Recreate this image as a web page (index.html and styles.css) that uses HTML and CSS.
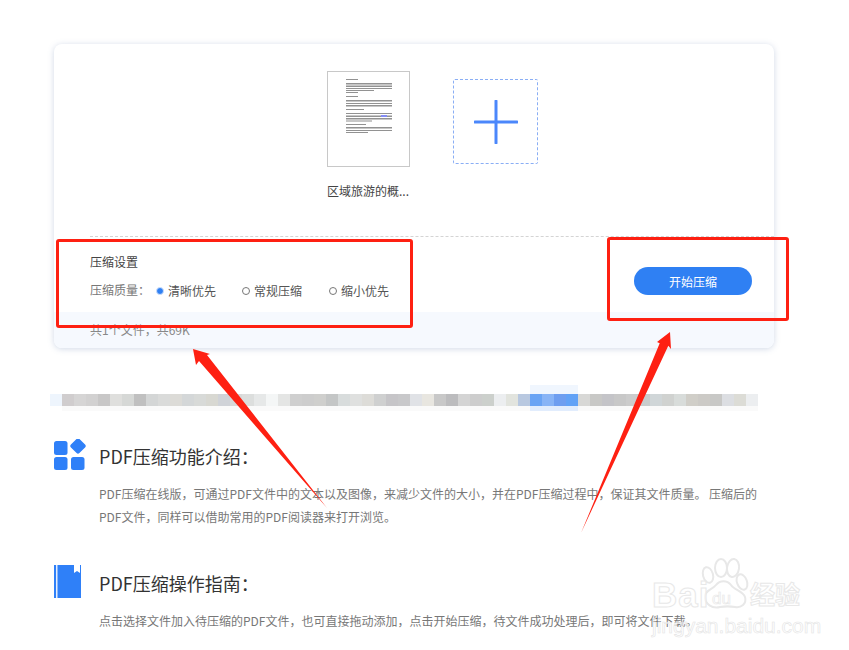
FILE: index.html
```html
<!DOCTYPE html>
<html lang="zh-CN">
<head>
<meta charset="utf-8">
<title>PDF压缩</title>
<link rel="stylesheet" href="styles.css">
</head>
<body>
<main class="page">
  <section class="card">
    <div class="files">
      <figure class="file">
        <div class="thumb">
          <svg class="thumb-lines" width="81" height="93" viewBox="0 0 81 93">
            <g fill="#555" opacity=".75">
              <rect x="18" y="7" width="12" height="1"/>
              <rect x="18" y="11" width="46" height="1.5"/><rect x="18" y="13.5" width="46" height="1.5"/><rect x="18" y="16" width="46" height="1"/><rect x="18" y="18" width="28" height="1"/>
              <rect x="18" y="20" width="12" height="1"/>
              <rect x="18" y="24" width="12" height="1"/>
              <rect x="18" y="28" width="46" height="1.5"/><rect x="18" y="31" width="46" height="1"/><rect x="18" y="33" width="46" height="1.5"/>
              <rect x="18" y="37" width="18" height="1"/>
              <rect x="18" y="41" width="46" height="1"/><rect x="18" y="43.5" width="46" height="1.5"/><rect x="18" y="46" width="46" height="1.5"/><rect x="18" y="48.5" width="26" height="1"/>
              <rect x="18" y="52" width="20" height="1"/>
              <rect x="18" y="55" width="46" height="1.5"/><rect x="18" y="58" width="46" height="1"/><rect x="18" y="60" width="22" height="1"/>
            </g>
            <rect x="53" y="43" width="6" height="2" fill="#6f79f2"/>
          </svg>
        </div>
        <figcaption class="file-name">区域旅游的概...</figcaption>
      </figure>
      <button class="add" type="button" aria-label="添加文件">
        <svg width="44" height="44" viewBox="0 0 44 44"><path d="M22 1v42M1 22h42" fill="none" stroke="#4b87fb" stroke-width="3" stroke-linecap="round"/></svg>
      </button>
    </div>
    <div class="settings">
      <div class="options">
        <h2 class="options-title">压缩设置</h2>
        <div class="quality">
          <span class="quality-label">压缩质量：</span>
          <span class="radio radio-first"><i class="dot dot-on"></i>清晰优先</span>
          <span class="radio radio-second"><i class="dot"></i>常规压缩</span>
          <span class="radio"><i class="dot"></i>缩小优先</span>
        </div>
      </div>
      <button class="start" type="button">开始压缩</button>
    </div>
    <div class="summary">共1个文件，共69K</div>
  </section>

  <svg class="mosaic" width="708" height="26" viewBox="0 0 708 26" shape-rendering="crispEdges" aria-hidden="true">
    <rect x="480" y="0" width="48" height="9" fill="#f0f6fe"/>
    <rect x="12" y="21" width="470" height="5" fill="#fafafa"/><rect x="480" y="21" width="48" height="5" fill="#e2edfd"/><rect x="528" y="21" width="180" height="5" fill="#fafafa"/>
    <g>
      <rect x="0" y="9" width="12" height="12" fill="#eef5fd"/><rect x="12" y="9" width="12" height="12" fill="#d0cdce"/><rect x="24" y="9" width="12" height="12" fill="#d6d5d5"/><rect x="36" y="9" width="12" height="12" fill="#d2d1d1"/><rect x="48" y="9" width="12" height="12" fill="#c8c7c7"/><rect x="60" y="9" width="12" height="12" fill="#dfdfdd"/><rect x="72" y="9" width="12" height="12" fill="#d6d8d6"/><rect x="84" y="9" width="12" height="12" fill="#c0c0c0"/><rect x="96" y="9" width="12" height="12" fill="#d4d6d6"/><rect x="108" y="9" width="12" height="12" fill="#dadbda"/><rect x="120" y="9" width="12" height="12" fill="#dcdbd7"/><rect x="132" y="9" width="12" height="12" fill="#d4d7d8"/><rect x="144" y="9" width="12" height="12" fill="#d8dad8"/><rect x="156" y="9" width="12" height="12" fill="#d8d8d2"/><rect x="168" y="9" width="12" height="12" fill="#d0d3d8"/><rect x="180" y="9" width="12" height="12" fill="#d8d8d8"/><rect x="192" y="9" width="12" height="12" fill="#dcdedd"/><rect x="204" y="9" width="12" height="12" fill="#e6e8e8"/><rect x="216" y="9" width="12" height="12" fill="#f4f6f6"/><rect x="228" y="9" width="12" height="12" fill="#e4e5e4"/><rect x="240" y="9" width="12" height="12" fill="#cfcfcf"/><rect x="252" y="9" width="12" height="12" fill="#cdcdcd"/><rect x="264" y="9" width="12" height="12" fill="#cfcfcd"/><rect x="276" y="9" width="12" height="12" fill="#c4c6c6"/><rect x="288" y="9" width="12" height="12" fill="#d8dcdc"/><rect x="300" y="9" width="12" height="12" fill="#dfe0df"/><rect x="312" y="9" width="12" height="12" fill="#dddcd8"/><rect x="324" y="9" width="12" height="12" fill="#cfd0d0"/><rect x="336" y="9" width="12" height="12" fill="#c6c5c8"/><rect x="348" y="9" width="12" height="12" fill="#c8c8ca"/><rect x="360" y="9" width="12" height="12" fill="#e0e2e6"/><rect x="372" y="9" width="12" height="12" fill="#e8e6e0"/><rect x="384" y="9" width="12" height="12" fill="#c8c8c8"/><rect x="396" y="9" width="12" height="12" fill="#bcbcbe"/><rect x="408" y="9" width="12" height="12" fill="#d4d4d4"/><rect x="420" y="9" width="12" height="12" fill="#cdcdcd"/><rect x="432" y="9" width="12" height="12" fill="#ccd0cc"/><rect x="444" y="9" width="12" height="12" fill="#eceef0"/><rect x="456" y="9" width="12" height="12" fill="#e2e4de"/><rect x="468" y="9" width="12" height="12" fill="#b8c8e0"/><rect x="480" y="9" width="12" height="12" fill="#6aa4f4"/><rect x="492" y="9" width="12" height="12" fill="#88b4f6"/><rect x="504" y="9" width="12" height="12" fill="#6e9ef0"/><rect x="516" y="9" width="12" height="12" fill="#62a2f6"/><rect x="528" y="9" width="12" height="12" fill="#d8d8d6"/><rect x="540" y="9" width="12" height="12" fill="#c8c8c6"/><rect x="552" y="9" width="12" height="12" fill="#c4c4c8"/><rect x="564" y="9" width="12" height="12" fill="#c8c8c8"/><rect x="576" y="9" width="12" height="12" fill="#cccccc"/><rect x="588" y="9" width="12" height="12" fill="#c8cccc"/><rect x="600" y="9" width="12" height="12" fill="#d0d6d8"/><rect x="612" y="9" width="12" height="12" fill="#d0d2d0"/><rect x="624" y="9" width="12" height="12" fill="#d8dcda"/><rect x="636" y="9" width="12" height="12" fill="#d0cec8"/><rect x="648" y="9" width="12" height="12" fill="#cccac6"/><rect x="660" y="9" width="12" height="12" fill="#c8c8c6"/><rect x="672" y="9" width="12" height="12" fill="#dcdee2"/><rect x="684" y="9" width="12" height="12" fill="#dcdcd6"/><rect x="696" y="9" width="12" height="12" fill="#eceef0"/>
    </g>
  </svg>

  <section class="intro intro-first">
    <h2 class="intro-title">
      <svg class="intro-icon" width="33" height="33" viewBox="0 0 33 33">
        <g fill="#2f80f8">
          <rect x="0" y="2" width="13.5" height="14" rx="2.5"/>
          <rect x="0" y="18" width="13.5" height="13" rx="2.5"/>
          <rect x="17" y="18" width="13.5" height="13" rx="2.5"/>
          <rect x="18" y="1" width="12" height="12" rx="2" transform="rotate(45 24 7)"/>
        </g>
      </svg>
      PDF压缩功能介绍：
    </h2>
    <p class="intro-text">PDF压缩在线版，可通过PDF文件中的文本以及图像，来减少文件的大小，并在PDF压缩过程中，保证其文件质量。 压缩后的PDF文件，同样可以借助常用的PDF阅读器来打开浏览。</p>
  </section>

  <section class="intro">
    <h2 class="intro-title">
      <svg class="intro-icon intro-icon-book" width="33" height="33" viewBox="0 0 33 33">
        <rect x="0" y="0" width="27" height="33" fill="#2f80f8"/>
        <rect x="2" y="0" width="1.5" height="33" fill="#e4eefe"/>
        <path d="M20 0h6v8l-3-2-3 2z" fill="#fff"/>
      </svg>
      PDF压缩操作指南：
    </h2>
    <p class="intro-text">点击选择文件加入待压缩的PDF文件，也可直接拖动添加，点击开始压缩，待文件成功处理后，即可将文件下载。</p>
  </section>
</main>

<div class="mark mark-left"></div>
<div class="mark mark-right"></div>

<svg class="arrows" width="849" height="650" viewBox="0 0 849 650" aria-hidden="true">
  <path d="M193 349 210 354 207 355 327 508 199 361 196 365Z" fill="#fe2012"/>
  <path d="M670 332 671 349 668.3 345.7 581 533 659.7 343.3 657 342Z" fill="#fe2012"/>
</svg>

<div class="watermark" aria-hidden="true">
  <svg class="paw" width="60" height="56" viewBox="0 0 60 56">
    <g fill="none" stroke="#e8e8e8" stroke-width="2">
      <ellipse cx="15" cy="20" rx="5" ry="8" transform="rotate(-15 15 20)"/>
      <ellipse cx="28" cy="13" rx="6" ry="9"/>
      <ellipse cx="40" cy="13" rx="6" ry="9" transform="rotate(8 40 13)"/>
      <ellipse cx="49" cy="27" rx="5" ry="8" transform="rotate(-20 49 27)"/>
      <path d="M12 42c0-7 7-7 11-12 4-5 11-5 15 0 3 5 12 6 14 12 2 7-4 11-10 10-6-1-9-1-15 0-8 2-15-3-15-10z"/>
    </g>
  </svg>
  <span class="wm-bai">Bai</span>
  <span class="wm-du">du</span>
  <span class="wm-jy">经验</span>
  <span class="wm-url">jingyan.baidu.com</span>
</div>
</body>
</html>
```

FILE: styles.css
```css
* { box-sizing: border-box; }
html, body { margin: 0; height: 650px; overflow: hidden; background: #fff; }
body { font-family: "Noto Sans CJK SC", "Noto Sans", sans-serif; color: #333; font-size: 12px; }

.page { padding: 44px 0 0 50px; width: 849px; }

.card {
  width: 720px; height: 304px; margin-left: 4px;
  display: flex; flex-direction: column;
  background: #fff; border-radius: 8px;
  box-shadow: 0 1px 6px rgba(90, 120, 170, .28);
  overflow: hidden;
}
.files { height: 193px; display: flex; align-items: flex-start; gap: 43px; padding: 27px 0 0 273px; position: relative; }
.file { margin: 0; width: 83px; }
.thumb { width: 83px; height: 96px; border: 1px solid #c8c8c8; background: #fff; }
.thumb-lines { display: block; filter: blur(.5px); opacity: .85; }
.file-name { margin-top: 15px; line-height: 18px; white-space: nowrap; color: #444; }
.add {
  width: 85px; height: 85px; margin-top: 8px; padding: 0;
  display: flex; align-items: center; justify-content: center;
  background: #fff; border: 1px dashed #8aaef5; border-radius: 2px;
}
.settings {
  height: 76px; margin-left: 36px;
  display: flex; justify-content: space-between;
  border-top: 1px dashed #d4d4d4;
}
.options { padding-top: 16px; }
.options-title { margin: 0; font-size: 12px; font-weight: 400; line-height: 18px; color: #444; }
.quality { margin-top: 9px; display: flex; align-items: center; line-height: 18px; color: #666; }
.quality-label { width: 66px; color: #777; }
.radio { display: flex; align-items: center; gap: 4px; padding-top: 2px; color: #555; }
.radio-first { width: 86px; }
.radio-second { width: 87px; }
.dot { width: 8px; height: 8px; border-radius: 50%; border: 1px solid #777; background: #fff; }
.dot-on { border: 1px solid #cfe0fb; background: #2f80f3; }
.start {
  width: 118px; height: 28px; margin: 30px 22px 0 0; padding: 0;
  background: #2f80f3; color: #fff; border: 0; border-radius: 14px;
  font: 12px "Noto Sans CJK SC", sans-serif;
}
.summary { flex: 1; padding-left: 36px; background: #f6f9fe; color: #888; line-height: 36px; }

.mosaic { display: block; margin-top: 37px; }

.intro { padding-left: 4px; margin-top: 38px; }
.intro-first { margin-top: 28px; }
.intro-title { margin: 0; display: flex; align-items: center; height: 33px; font-size: 18px; font-weight: 400; color: #333; white-space: nowrap; }
.intro-icon { flex: none; margin-right: 12px; }
.intro-icon-book { margin-top: -3px; }
.intro-text { margin: 10px 0 0 45px; width: 662px; font-size: 12px; line-height: 23px; color: #777; }

.mark { position: absolute; border: 3px solid #fe2012; border-radius: 3px; }
.mark-left { left: 56px; top: 239px; width: 357px; height: 89px; }
.mark-right { left: 607px; top: 237px; width: 182px; height: 84px; }
.arrows { position: absolute; left: 0; top: 0; pointer-events: none; }

.watermark { position: absolute; left: 650px; top: 555px; width: 199px; height: 95px; pointer-events: none; }
.paw { position: absolute; left: 43px; top: 0; }
.wm-bai, .wm-du, .wm-jy, .wm-url { position: absolute; font-family: "Liberation Sans", sans-serif; white-space: nowrap; line-height: 1; color: rgba(255, 255, 255, .6); -webkit-text-stroke: 1px #e8e8e8; }
.wm-bai { left: 2px; top: 22px; font-size: 35px; font-weight: 700; letter-spacing: 1px; }
.wm-du { left: 62px; top: 35px; font-size: 17px; -webkit-text-stroke-width: .7px; }
.wm-jy { left: 100px; top: 26px; font-family: "Noto Sans CJK SC", sans-serif; font-size: 25px; font-weight: 700; }
.wm-url { left: 2px; top: 60px; font-size: 21px; -webkit-text-stroke: .6px #e4e4e4; }
```
